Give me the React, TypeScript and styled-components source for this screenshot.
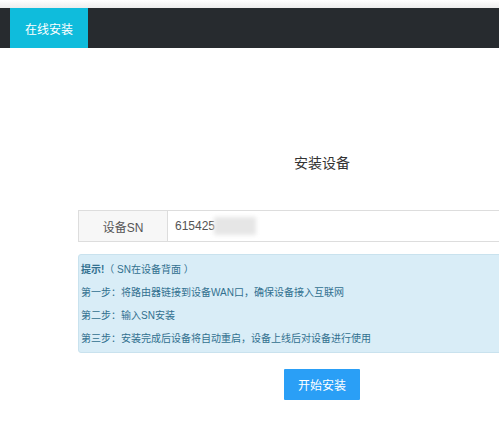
import styled, { createGlobalStyle } from "styled-components";

const GlobalStyle = createGlobalStyle`
  html, body {
    margin: 0;
    padding: 0;
    background: #fff;
    overflow: hidden;
  }
  body {
    font-family: "Liberation Sans", "Noto Sans CJK SC", sans-serif;
    font-size: 12px;
    color: #333;
  }
`;

const Page = styled.div`
  width: 499px;
  height: 437px;
  overflow: hidden;
  padding-top: 8px;
  background: #fff;
  box-sizing: border-box;
  position: relative;
  &::before {
    content: "";
    position: absolute;
    top: 0;
    left: 0;
    right: 0;
    height: 8px;
    background: linear-gradient(#fff, #ededed);
  }
`;

const NavBar = styled.div`
  display: flex;
  height: 40px;
  background: #272b2f;
  padding-left: 10px;
`;

const NavTab = styled.div<{ $active?: boolean }>`
  width: 78px;
  display: flex;
  align-items: center;
  justify-content: center;
  color: #fff;
  font-size: 12px;
  background: ${(p) => (p.$active ? "#0fbcdc" : "transparent")};
`;

const Content = styled.div`
  width: 488px;
  margin-left: 78px;
  padding-top: 106px;
  display: flex;
  flex-direction: column;
`;

const Title = styled.h2`
  margin: 0;
  font-size: 14px;
  font-weight: normal;
  text-align: center;
  color: #333;
  line-height: 18px;
`;

const FormRow = styled.div`
  margin-top: 38px;
  display: flex;
  height: 30px;
  border: 1px solid #ddd;
`;

const Label = styled.div`
  width: 88px;
  background: #f7f7f7;
  border-right: 1px solid #ddd;
  display: flex;
  align-items: center;
  justify-content: center;
  color: #555;
`;

const Value = styled.div`
  flex: 1;
  display: flex;
  align-items: center;
  padding-left: 7px;
  color: #555;
`;

const Blur = styled.span`
  display: inline-block;
  width: 42px;
  height: 18px;
  background: #e6e6e6;
  filter: blur(2px);
  margin-left: -1px;
`;

const Hint = styled.div`
  margin-top: 12px;
  background: #d9edf7;
  border: 1px solid #c9e2ee;
  border-radius: 3px;
  padding: 7px 0 5px 2px;
  color: #31708f;
  font-size: 10px;
  display: flex;
  flex-direction: column;
  gap: 7px;
`;

const HintLine = styled.div`
  line-height: 16px;
`;

const Strong = styled.b`
  font-weight: bold;
`;

const ButtonRow = styled.div`
  margin-top: 16px;
  display: flex;
  justify-content: center;
`;

const Button = styled.button`
  width: 76px;
  height: 31px;
  border: 0;
  border-radius: 1px;
  background: #2a9ff6;
  color: #fff;
  font-family: inherit;
  font-size: 12px;
  cursor: pointer;
`;

export default function App() {
  return (
    <Page>
      <GlobalStyle />
      <NavBar>
        <NavTab $active>在线安装</NavTab>
      </NavBar>
      <Content>
        <Title>安装设备</Title>
        <FormRow>
          <Label>设备SN</Label>
          <Value>
            615425<Blur />
          </Value>
        </FormRow>
        <Hint>
          <HintLine>
            <Strong>提示!</Strong>（ SN在设备背面 ）
          </HintLine>
          <HintLine>第一步：将路由器链接到设备WAN口，确保设备接入互联网</HintLine>
          <HintLine>第二步：输入SN安装</HintLine>
          <HintLine>第三步：安装完成后设备将自动重启，设备上线后对设备进行使用</HintLine>
        </Hint>
        <ButtonRow>
          <Button>开始安装</Button>
        </ButtonRow>
      </Content>
    </Page>
  );
}
